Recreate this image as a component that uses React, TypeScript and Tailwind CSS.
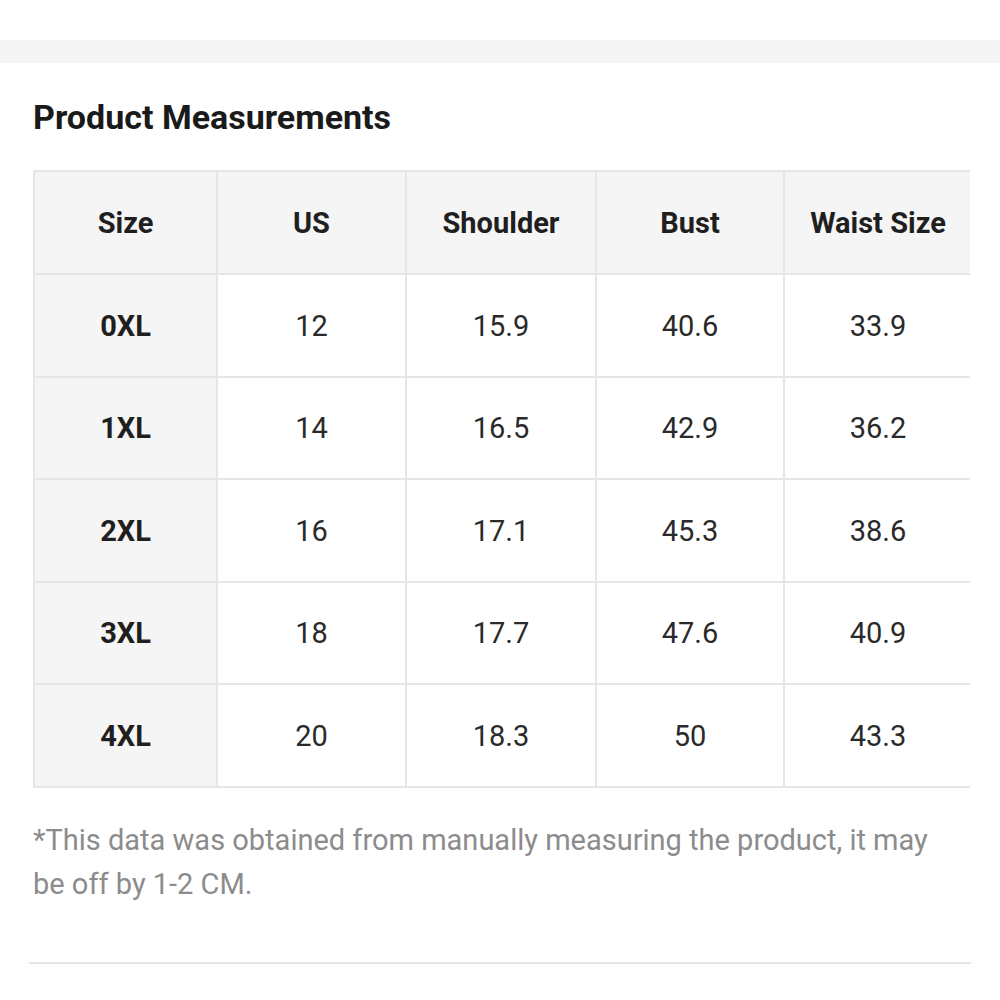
import React from "react";

const headers = ["Size", "US", "Shoulder", "Bust", "Waist Size"];
const widths = ["w-[183px]", "w-[189px]", "w-[190px]", "w-[188px]", "w-[188px]"];

const rows = [
  ["0XL", "12", "15.9", "40.6", "33.9"],
  ["1XL", "14", "16.5", "42.9", "36.2"],
  ["2XL", "16", "17.1", "45.3", "38.6"],
  ["3XL", "18", "17.7", "47.6", "40.9"],
  ["4XL", "20", "18.3", "50", "43.3"],
];

const App = () => {
  return (
    <div className="w-[1000px] h-[1000px] bg-white font-['Roboto',sans-serif] pt-10">
      {/* top band */}
      <div className="h-[23px] bg-[#f5f5f5]" />

      <div className="pl-[33px] pr-[30px]">
        <h2 className="mt-[34px] text-[34px] font-bold text-[#1a1a1a] leading-[40px]">
          Product Measurements
        </h2>

        <div className="mt-[33px] w-[937px] overflow-hidden">
          <table className="border-collapse table-fixed w-[928px]">
            <thead>
              <tr>
                {headers.map((h, i) => (
                  <th
                    key={h}
                    className={`${widths[i]} h-[103px] pt-[3px] border-2 border-[#e6e6e6] bg-[#f5f5f5] text-[29px] font-bold text-[#1f1f1f] text-center`}
                  >
                    {h}
                  </th>
                ))}
              </tr>
            </thead>
            <tbody>
              {rows.map((r) => (
                <tr key={r[0]}>
                  {r.map((c, i) => (
                    <td
                      key={i}
                      className={
                        i === 0
                          ? "h-[102.5px] pt-[2px] border-2 border-[#e6e6e6] bg-[#f5f5f5] text-[29px] font-bold text-[#1f1f1f] text-center"
                          : "h-[102.5px] pt-[2px] border-2 border-[#e6e6e6] bg-white text-[29px] text-[#2a2a2a] text-center"
                      }
                    >
                      {c}
                    </td>
                  ))}
                </tr>
              ))}
            </tbody>
          </table>
        </div>

        <p className="mt-[30px] max-w-[915px] text-[29px] leading-[44px] text-[#8c8c8c]">
          *This data was obtained from manually measuring the product, it may
          be off by 1-2 CM.
        </p>
      </div>

      <div className="mt-[56px] mx-[29px] h-[2px] bg-[#e6e6e6]" />
    </div>
  );
};

export default App;
